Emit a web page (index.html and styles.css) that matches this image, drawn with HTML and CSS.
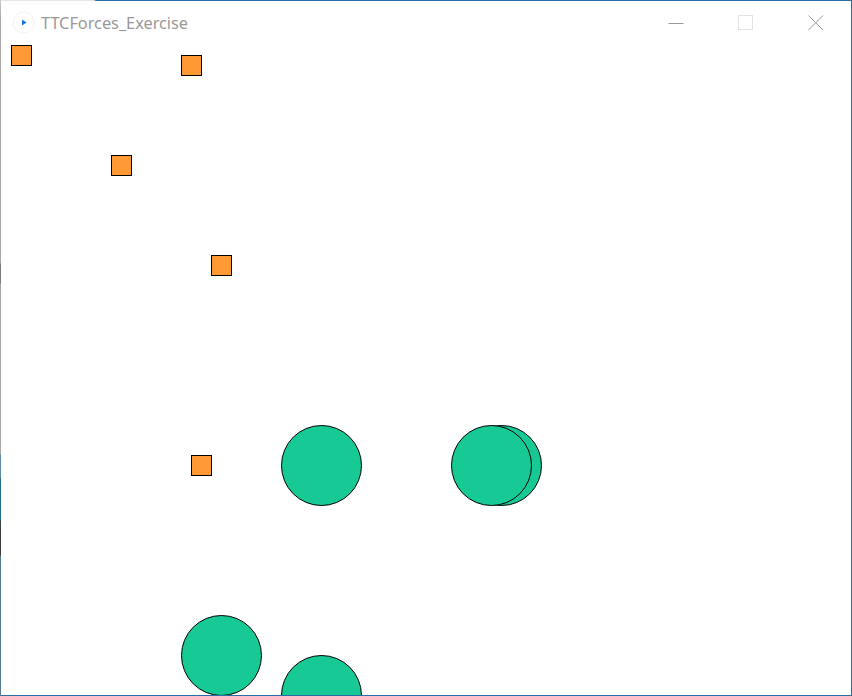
FILE: index.html
```html
<!DOCTYPE html>
<html>
<head>
<meta charset="utf-8">
<link rel="stylesheet" href="styles.css">
</head>
<body>
<div class="window">
  <div class="left-edge"></div>
  <div class="main">
    <div class="top-edge"></div>
    <div class="titlebar">
      <svg class="app-icon" width="24" height="24" viewBox="0 0 24 24">
        <circle cx="11.5" cy="11.5" r="10.5" fill="#fff" stroke="#f2f2f2" stroke-width="1"/>
        <path d="M10 8.5 L14.5 11.5 L10 14.5 Z" fill="#1a73e8"/>
      </svg>
      <span class="title">TTCForces_Exercise</span>
      <div class="controls">
        <div class="ctl">
          <svg width="16" height="16" viewBox="0 0 16 16"><path d="M0.5 8.5 H15.5" stroke="#999" stroke-width="1"/></svg>
        </div>
        <div class="ctl">
          <svg width="16" height="16" viewBox="0 0 16 16"><rect x="0.5" y="0.5" width="14" height="14" fill="none" stroke="#e3e3e3" stroke-width="1"/></svg>
        </div>
        <div class="ctl">
          <svg width="16" height="16" viewBox="0 0 16 16"><path d="M0.5 0.5 L15 15 M15 0.5 L0.5 15" stroke="#999" stroke-width="1"/></svg>
        </div>
      </div>
    </div>
    <svg class="canvas" width="850" height="650" viewBox="0 0 850 650">
      <g fill="#ff9933" stroke="#000" stroke-width="1">
        <rect x="10.5" y="0.5" width="20" height="20"/>
        <rect x="180.5" y="10.5" width="20" height="20"/>
        <rect x="110.5" y="110.5" width="20" height="20"/>
        <rect x="210.5" y="210.5" width="20" height="20"/>
        <rect x="190.5" y="410.5" width="20" height="20"/>
      </g>
      <g fill="#16c995" stroke="#000" stroke-width="1">
        <circle cx="320.5" cy="420.5" r="40"/>
        <circle cx="500.5" cy="420.5" r="40"/>
        <circle cx="490.5" cy="420.5" r="40"/>
        <circle cx="220.5" cy="610.5" r="40"/>
        <circle cx="320.5" cy="650.5" r="40"/>
      </g>
    </svg>
  </div>
</div>
</body>
</html>
```
FILE: styles.css
```css
html, body {
  margin: 0;
  padding: 0;
  background: #fff;
}
body {
  width: 852px;
  height: 696px;
  overflow: hidden;
}
.window {
  display: flex;
  width: 852px;
  height: 696px;
}
.left-edge {
  width: 1px;
  flex: none;
  background: linear-gradient(to bottom,
    #c8c8c8 0px, #a9a9a9 20px, #a9a9a9 263px,
    #7b7b7b 264px, #7b7b7b 283px,
    #a9a9a9 284px, #a9a9a9 454px,
    #5d8aa5 455px, #5d8aa5 478px,
    #236c94 479px, #236c94 520px,
    #3a3d42 521px, #3a3d42 555px,
    #58798f 556px, #58798f 696px);
}
.main {
  flex: 1;
  display: flex;
  flex-direction: column;
  border-right: 1px solid #2a6ea5;
  border-bottom: 1px solid #2a6ea5;
}
.top-edge {
  height: 1px;
  flex: none;
  background: linear-gradient(to right, #e6e6e6 0px, #e6e6e6 93px, #2a6ea5 95px, #2a6ea5 100%);
}
.titlebar {
  height: 44px;
  flex: none;
  display: flex;
  align-items: center;
  font-family: "Noto Sans", "Open Sans", sans-serif;
}
.app-icon {
  margin-left: 11px;
  flex: none;
}
.title {
  margin-left: 5px;
  font-size: 16.3px;
  color: #999;
  margin-top: 0px;
}
.controls {
  margin-left: auto;
  display: flex;
  height: 44px;
}
.ctl {
  width: 70px;
  height: 44px;
  display: flex;
  align-items: flex-start;
  justify-content: center;
}
.ctl svg {
  margin-top: 14px;
}
.canvas {
  display: block;
  flex: none;
}
```
